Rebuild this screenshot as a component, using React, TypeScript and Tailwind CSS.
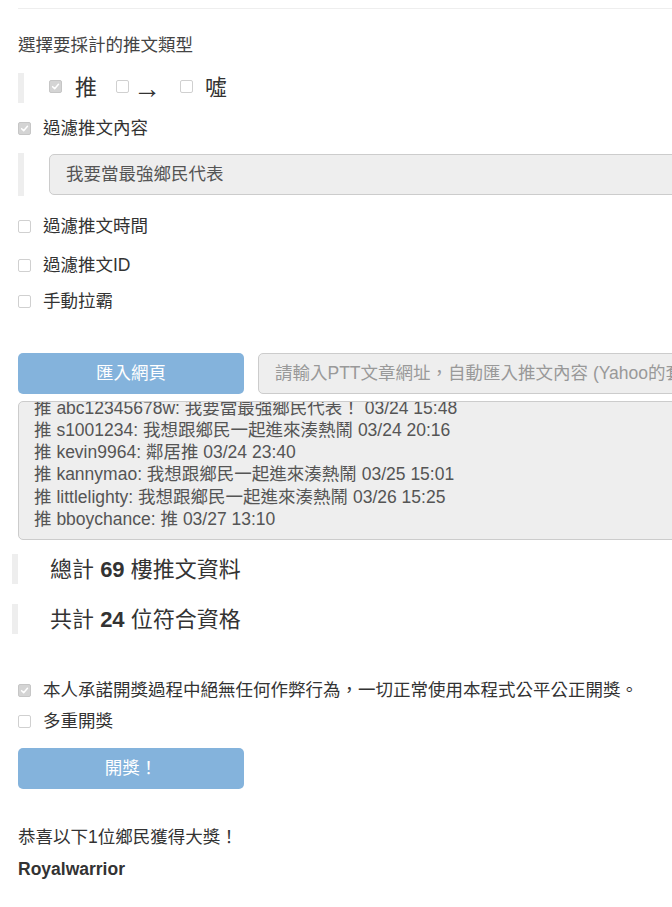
import { Fragment } from 'react';

const FONT = "font-['Liberation_Sans','Noto_Sans_CJK_TC',sans-serif]";

const PUSHES = [
  { id: 'abc12345678w', text: '我要當最強鄉民代表！', time: '03/24 15:48' },
  { id: 's1001234', text: '我想跟鄉民一起進來湊熱鬧', time: '03/24 20:16' },
  { id: 'kevin9964', text: '鄰居推', time: '03/24 23:40' },
  { id: 'kannymao', text: '我想跟鄉民一起進來湊熱鬧', time: '03/25 15:01' },
  { id: 'littlelighty', text: '我想跟鄉民一起進來湊熱鬧', time: '03/26 15:25' },
  { id: 'bboychance', text: '推', time: '03/27 13:10' },
];

const Box = ({ checked = false }: { checked?: boolean }) => (
  <span
    className={`inline-flex h-[13px] w-[13px] shrink-0 items-center justify-center rounded-[2px] border ${
      checked ? 'border-[#c6c6c6] bg-[#d4d4d4]' : 'border-[#d0d0d0] bg-white'
    }`}
  >
    {checked && (
      <svg width="9" height="9" viewBox="0 0 10 10" fill="none">
        <path d="M1.8 5.2 L4.1 7.4 L8.3 2.6" stroke="#fff" strokeWidth="1.7" strokeLinecap="round" strokeLinejoin="round" />
      </svg>
    )}
  </span>
);

const CheckRow = ({ label, checked = false, className = '' }: { label: string; checked?: boolean; className?: string }) => (
  <div className={`flex h-[24px] items-center ${className}`}>
    <Box checked={checked} />
    <span className="ml-[12px] text-[17.5px] text-[#333]">{label}</span>
  </div>
);

export default function App() {
  return (
    <div className={`w-full overflow-hidden bg-white ${FONT}`}>
      <div className="flex w-[1000px] flex-col pl-[18px] pb-[38px]">
        {/* hr */}
        <div className="mt-[8px] border-t border-[#eee]" />

        <div className="mt-[23px] flex h-[26px] items-center text-[17.5px] text-[#444]">選擇要採計的推文類型</div>

        {/* 推 / → / 噓 */}
        <div className="mt-[15px] flex h-[30px] items-center border-l-[6px] border-[#eee] text-[22px] text-[#333]">
          <span className="ml-[25px] mb-[3px] flex"><Box checked /></span>
          <span className="ml-[13px] leading-none">推</span>
          <span className="ml-[19px] mb-[3px] flex"><Box /></span>
          <span className="ml-[4px] mt-[1px] text-[28px] font-light leading-none">→</span>
          <span className="ml-[19px] mb-[3px] flex"><Box /></span>
          <span className="ml-[12px] leading-none">噓</span>
        </div>

        <CheckRow label="過濾推文內容" checked className="mt-[13px]" />

        <div className="mt-[13px] flex h-[43px] items-center border-l-[6px] border-[#eee] pl-[25px]">
          <div className="flex h-[41px] flex-1 items-center rounded-[5px] border border-[#ccc] bg-[#eee] pl-[16px] text-[17.5px] text-[#555]">
            我要當最強鄉民代表
          </div>
        </div>

        <CheckRow label="過濾推文時間" className="mt-[18px]" />
        <CheckRow label="過濾推文ID" className="mt-[15px]" />
        <CheckRow label="手動拉霸" className="mt-[12px]" />

        {/* import row */}
        <div className="mt-[40px] flex h-[41px] gap-[14px]">
          <button className="flex w-[226px] items-center justify-center rounded-[5px] bg-[#84b3dc] text-[17.5px] text-white">
            匯入網頁
          </button>
          <div className="flex flex-1 items-center rounded-[5px] border border-[#ccc] bg-[#eee] pl-[16px] text-[17.5px] text-[#999]">
            請輸入PTT文章網址，自動匯入推文內容 (Yahoo的套件不支援)
          </div>
        </div>

        {/* comments box (scrolled) */}
        <div className="mt-[7px] h-[139px] overflow-hidden rounded-[5px] border border-[#ccc] bg-[#eee] px-[15px] text-[17.5px] leading-[22.25px] text-[#555]">
          <div className="mt-[-5.5px]">
            {PUSHES.map((p) => (
              <div key={p.id} className="whitespace-nowrap">
                推 {p.id}: {p.text} {p.time}
              </div>
            ))}
          </div>
        </div>

        {/* stats */}
        <div className="ml-[-6px] mt-[14px] flex h-[30px] items-center border-l-[6px] border-[#eee] pl-[32px] text-[22px] text-[#333]">
          <span>總計 <b>69</b> 樓推文資料</span>
        </div>
        <div className="ml-[-6px] mt-[20px] flex h-[30px] items-center border-l-[6px] border-[#eee] pl-[32px] text-[22px] text-[#333]">
          <span>共計 <b>24</b> 位符合資格</span>
        </div>

        <CheckRow label="本人承諾開獎過程中絕無任何作弊行為，一切正常使用本程式公平公正開獎。" checked className="mt-[44px]" />
        <CheckRow label="多重開獎" className="mt-[7px]" />

        <button className="mt-[15px] flex h-[41px] w-[226px] items-center justify-center rounded-[5px] bg-[#84b3dc] text-[17.5px] text-white">
          開獎！
        </button>

        <div className="mt-[36px] flex h-[24px] items-center text-[17.5px] text-[#333]">恭喜以下1位鄉民獲得大獎！</div>
        {['Royalwarrior'].map((w) => (
          <Fragment key={w}>
            <div className="mt-[8px] flex h-[24px] items-center text-[17.5px] font-bold text-[#333]">{w}</div>
          </Fragment>
        ))}
      </div>
    </div>
  );
}
